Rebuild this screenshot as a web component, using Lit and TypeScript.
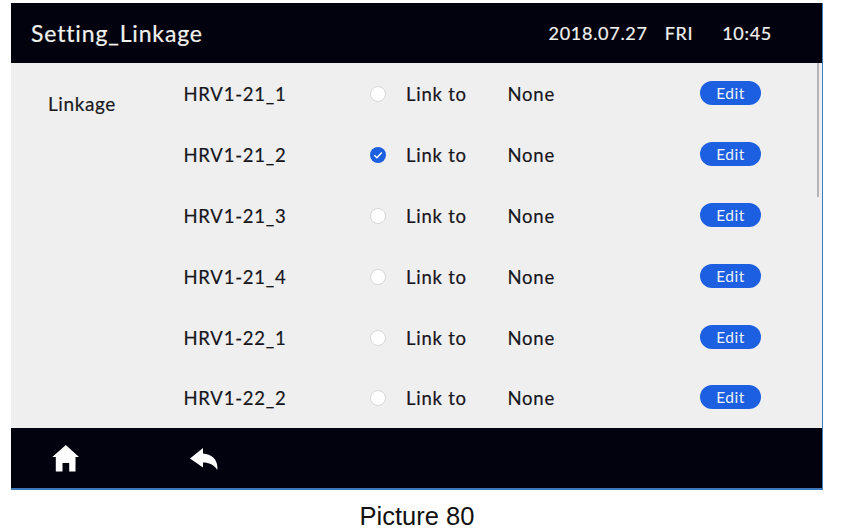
import { LitElement, html, css, svg } from "lit";
import { customElement } from "lit/decorators.js";

const rows = ["HRV1-21_1", "HRV1-21_2", "HRV1-21_3", "HRV1-21_4", "HRV1-22_1", "HRV1-22_2"];

@customElement("app-root")
export class AppRoot extends LitElement {
  static styles = css`
    :host { display: block; width: 848px; height: 531px; background: #fff; overflow: hidden;
      font-family: "Lato", "Noto Sans", sans-serif; }
    .frame { margin: 3px 0 0 11px; width: 812px; height: 487px; box-sizing: border-box;
      display: flex; flex-direction: column; border-right: 1px solid #3f7fc0; border-bottom: 2px solid #3f78b8; background: #efeff0; }
    .header { height: 60px; flex: none; background: #02020e; color: #f1f1ee; display: flex; align-items: center; padding-left: 20px; font-size: 23px; letter-spacing: 0.85px; -webkit-text-stroke: 0.2px; }
    .title { flex: 1; }
    .date, .day, .time { font-size: 18px; letter-spacing: 0.7px; }
    .day { margin-left: 17px; }
    .time { margin-left: 29px; margin-right: 50px; }
    .body { flex: 1; position: relative; display: flex; min-height: 0; overflow: hidden; }
    .side { width: 173px; flex: none; padding: 29px 0 0 37px; box-sizing: border-box; font-size: 19px; letter-spacing: 0.6px; color: #1a1a20; line-height: 24px; -webkit-text-stroke: 0.2px; }
    .list { flex: 1; padding-top: 1px; }
    .row { height: 60.8px; display: flex; align-items: center; font-size: 18.5px; letter-spacing: 0.75px; color: #16161c; -webkit-text-stroke: 0.2px; }
    .name { width: 186px; flex: none; margin-left: -0.5px; }
    .radio { width: 16px; height: 16px; border-radius: 50%; background: #fff; border: 1px solid #d8d8d8; box-sizing: border-box; flex: none; margin-right: 20.5px; }
    .radio.on { background: #1c5fe0; border: none; display: flex; align-items: center; justify-content: center; }
    .radio svg { display: block; }
    .link { width: 101.5px; flex: none; }
    .none { width: 192px; flex: none; }
    .edit { width: 61px; height: 24px; box-sizing: border-box; padding-left: 1px; border-radius: 12px; background: #1c5fe0; color: #eef3fc; font-size: 15.5px; letter-spacing: 0.5px; display: flex; align-items: center; justify-content: center; flex: none; margin-bottom: 2px; -webkit-text-stroke: 0; }
    .scroll { position: absolute; left: 806px; top: 0; width: 2px; height: 134px; background: #b4b5b4; }
    .footer { height: 60px; flex: none; background: #02020e; display: flex; align-items: center; padding-left: 41px; gap: 110px; }
    .footer svg { display: block; }
    .caption { text-align: center; font-family: "Liberation Sans", Arial, sans-serif; font-size: 25.5px; line-height: 28px; color: #111; margin: 12px 0 0 -14px; }
  `;

  render() {
    return html`
      <div class="frame">
        <div class="header">
          <span class="title">Setting_Linkage</span>
          <span class="date">2018.07.27</span>
          <span class="day">FRI</span>
          <span class="time">10:45</span>
        </div>
        <div class="body">
          <div class="side">Linkage</div>
          <div class="list">
            ${rows.map((r, i) => html`
              <div class="row">
                <span class="name">${r}</span>
                ${i === 1
                  ? html`<span class="radio on"><svg width="12" height="12" viewBox="0 0 12 12">${svg`<path d="M2.3 6.2 L5 8.8 L9.8 3.6" fill="none" stroke="#fff" stroke-width="1.5"/>`}</svg></span>`
                  : html`<span class="radio"></span>`}
                <span class="link">Link to</span>
                <span class="none">None</span>
                <span class="edit">Edit</span>
              </div>`)}
          </div>
          <div class="scroll"></div>
        </div>
        <div class="footer">
          <svg width="28" height="28" viewBox="0 0 28 28">${svg`<path fill="#fff" d="M13.8 1 L27 13 L23.5 13 L23.5 27.5 L17.2 27.5 L17.2 19 L10.5 19 L10.5 27.5 L3.8 27.5 L3.8 13 L0.3 13 Z"/>`}</svg>
          <svg width="28" height="24" viewBox="0 0 28 24">${svg`<path fill="#fff" d="M13 2 L0 12.5 L13 21.5 L13 16.5 C19 16.5 24 18.5 27.3 24 C28.5 14 22 8 13 7.5 Z"/>`}</svg>
        </div>
      </div>
      <div class="caption">Picture 80</div>
    `;
  }
}
